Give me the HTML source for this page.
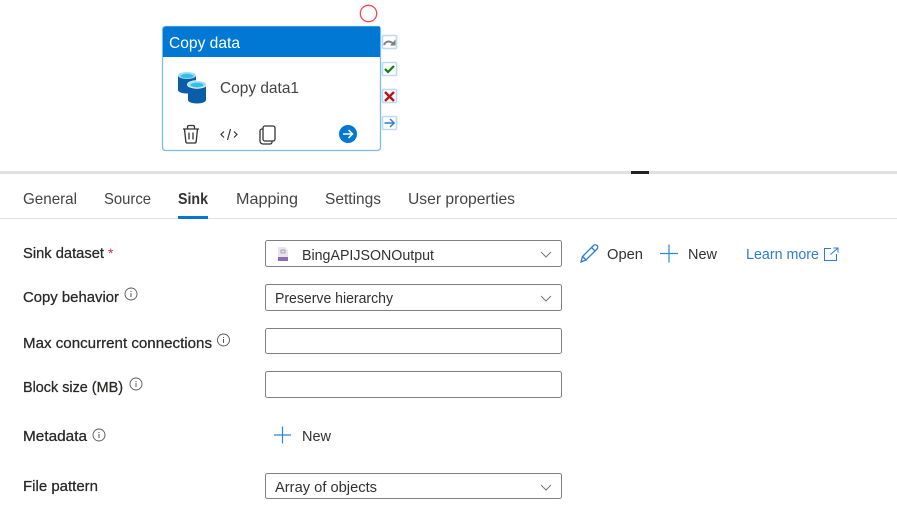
<!DOCTYPE html>
<html><head><meta charset="utf-8"><style>
html,body{margin:0;padding:0;background:#fff;width:897px;height:532px;overflow:hidden}
svg{display:block;filter:blur(.3px)}
text{font-family:"Liberation Sans",sans-serif;font-size:15px;fill:#323130}
.l{font-size:14.5px;fill:#292827;stroke:#292827;stroke-width:.25px}
.t{font-size:16px;fill:#444}
.b{fill:#fff;stroke:#808080;stroke-width:1}
.c{fill:none;stroke:#777;stroke-width:1}
.i{fill:none;stroke:#555;stroke-width:.9}
.p{fill:none;stroke:#2b88d8;stroke-width:1.2}
.s{fill:#fff;stroke:#bcdcf5;stroke-width:1.6}
</style></head><body>
<svg width="897" height="532" viewBox="0 0 897 532" xmlns="http://www.w3.org/2000/svg">
<rect width="897" height="532" fill="#fff"/>
<circle cx="368.5" cy="13.5" r="8.200" fill="#fff" stroke="#f4484f" stroke-width="1.300"/>
<!-- side buttons -->
<rect class="s" x="382.500" y="35.500" width="14" height="13" rx="1"/>
<rect class="s" x="382.500" y="62.500" width="14" height="13" rx="1"/>
<rect class="s" x="382.500" y="89.500" width="14" height="13" rx="1"/>
<rect class="s" x="382.500" y="116.500" width="14" height="13" rx="1"/>
<path d="M384 45c1.500-4 5.500-4.500 8.500-2" fill="none" stroke="#808080" stroke-width="2"/><path d="M395.500 39.500v6h-5.500z" fill="#808080"/>
<path d="M385 69l3 3 6-6" fill="none" stroke="#107c10" stroke-width="2.200"/>
<path d="M385 92l9 9M394 92l-9 9" fill="none" stroke="#b4161c" stroke-width="2.400"/>
<path d="M384.500 123h9.500M390 119l4.200 4-4.200 4" fill="none" stroke="#2b7cd3" stroke-width="1.400"/>
<!-- card -->
<rect x="162.500" y="26.500" width="218" height="124" rx="3" fill="#fff" stroke="#7dbce8" stroke-width="1.300"/>
<path d="M163 57V29.500a3 3 0 0 1 3-3H380V57z" fill="#0078d4"/>
<text x="169" y="48" style="font-size:16px;fill:#fff" textLength="71" lengthAdjust="spacingAndGlyphs">Copy data</text>
<!-- db icon -->
<path d="M178 76v14c0 2 4 3.500 9 3.500s9-1.500 9-3.500V76z" fill="#0a5ea8"/>
<ellipse cx="187" cy="75.500" rx="9" ry="3.500" fill="#9fdff2"/><ellipse cx="187" cy="76" rx="6.500" ry="2.200" fill="#35bfe6"/>
<path d="M188 85v15c0 2 4 3.500 9 3.500s9-1.500 9-3.500V85z" fill="#0a5ea8"/>
<ellipse cx="197" cy="84.500" rx="10" ry="4.200" fill="#fff"/>
<ellipse cx="197" cy="84.500" rx="9" ry="3.500" fill="#9fdff2"/><ellipse cx="197" cy="85" rx="6.500" ry="2.200" fill="#35bfe6"/>
<text class="t" x="220" y="93" textLength="79" lengthAdjust="spacingAndGlyphs">Copy data1</text>
<!-- trash -->
<g fill="none" stroke="#333" stroke-width="1.300">
<path d="M183 129h16M187.500 129v-2c0-1 .7-1.500 1.500-1.500h4c.8 0 1.500.5 1.500 1.500v2"/>
<path d="M184.500 129l1.300 12.500c.1 1 .8 1.500 1.700 1.500h7c.9 0 1.600-.5 1.700-1.500l1.300-12.500"/>
<path d="M189 132.500v7M193 132.500v7"/>
</g>
<!-- code -->
<path d="M224 131.500l-3 3 3 3M234 131.500l3 3-3 3M230.500 129l-3 11" fill="none" stroke="#333" stroke-width="1.200"/>
<!-- copy -->
<rect x="263" y="126" width="12" height="15" rx="2" fill="none" stroke="#333" stroke-width="1.300"/>
<path d="M263 129h-1a2 2 0 0 0-2 2v10a3 3 0 0 0 3 3h7a2 2 0 0 0 2-2v-1" fill="none" stroke="#333" stroke-width="1.300"/>
<circle cx="348" cy="134" r="9" fill="#0078d4"/>
<path d="M343 134h9.500M348.500 130l4 4-4 4" fill="none" stroke="#fff" stroke-width="1.500"/>
<!-- dividers -->
<rect x="0" y="171" width="897" height="3" fill="#e1e1e1"/>
<rect x="631" y="171" width="18" height="3" fill="#222"/>
<!-- tabs -->
<text class="t" x="23" y="204" textLength="54" lengthAdjust="spacingAndGlyphs">General</text>
<text class="t" x="104" y="204" textLength="47" lengthAdjust="spacingAndGlyphs">Source</text>
<text class="t" x="178" y="204" textLength="30" lengthAdjust="spacingAndGlyphs" style="font-weight:700;fill:#333">Sink</text>
<text class="t" x="236" y="204" textLength="62" lengthAdjust="spacingAndGlyphs">Mapping</text>
<text class="t" x="325" y="204" textLength="56" lengthAdjust="spacingAndGlyphs">Settings</text>
<text class="t" x="408" y="204" textLength="107" lengthAdjust="spacingAndGlyphs">User properties</text>
<rect x="0" y="218" width="897" height="1" fill="#e1e1e1"/>
<rect x="178" y="216" width="30" height="3" fill="#0078d4"/>
<!-- labels -->
<text class="l" x="23" y="258" textLength="81" lengthAdjust="spacingAndGlyphs">Sink dataset</text>
<text x="108" y="258" style="font-size:14px;fill:#c4314b">*</text>
<text class="l" x="23" y="302" textLength="96" lengthAdjust="spacingAndGlyphs">Copy behavior</text>
<text class="l" x="23" y="348" textLength="189" lengthAdjust="spacingAndGlyphs">Max concurrent connections</text>
<text class="l" x="23" y="392" textLength="100" lengthAdjust="spacingAndGlyphs">Block size (MB)</text>
<text class="l" x="23" y="441" textLength="64" lengthAdjust="spacingAndGlyphs">Metadata</text>
<text class="l" x="23" y="491" textLength="75" lengthAdjust="spacingAndGlyphs">File pattern</text>
<!-- info icons -->
<circle class="i" cx="131" cy="294" r="6"/><path d="M131 293v4M131 291v1" stroke="#555"/>
<circle class="i" cx="223.500" cy="340" r="6"/><path d="M223.500 339v4M223.500 337v1" stroke="#555"/>
<circle class="i" cx="136" cy="384" r="6"/><path d="M136 383v4M136 381v1" stroke="#555"/>
<circle class="i" cx="99" cy="435" r="6"/><path d="M99 434v4M99 432v1" stroke="#555"/>
<!-- boxes -->
<rect class="b" x="265.500" y="240.500" width="296" height="26" rx="2"/>
<rect class="b" x="265.500" y="284.500" width="296" height="26" rx="2"/>
<rect class="b" x="265.500" y="328.500" width="296" height="25" rx="2"/>
<rect class="b" x="265.500" y="371.500" width="296" height="26" rx="2"/>
<rect class="b" x="265.500" y="473.500" width="296" height="25" rx="2"/>
<path class="c" d="M541 252l5 5 5-5M541 296l5 5 5-5M541 485l5 5 5-5"/>
<!-- json icon -->
<path d="M278 247h7l3 3v11h-10z" fill="#e8e6ea"/><rect x="278" y="257" width="10" height="4" fill="#8b6bb1"/><rect x="281" y="250" width="4" height="3" fill="none" stroke="#8b6bb1" stroke-width=".6"/>
<text x="302" y="260" textLength="132" lengthAdjust="spacingAndGlyphs">BingAPIJSONOutput</text>
<text x="275" y="303" textLength="118" lengthAdjust="spacingAndGlyphs">Preserve hierarchy</text>
<text x="275" y="492" textLength="102" lengthAdjust="spacingAndGlyphs">Array of objects</text>
<!-- actions -->
<path d="M581 262l1.500-5.500 11-11c1-1 2.500-1 3.500 0s1 2.500 0 3.500l-11 11zM582.500 256.500l4 4M591.500 247.500l4 4" fill="none" stroke="#2b7cd3" stroke-width="1.300"/>
<text x="607" y="259" textLength="36" lengthAdjust="spacingAndGlyphs">Open</text>
<path class="p" d="M660 253.500h18M669 244.500v18"/>
<text x="688" y="259" textLength="29" lengthAdjust="spacingAndGlyphs">New</text>
<text x="746" y="259" textLength="73" lengthAdjust="spacingAndGlyphs" style="fill:#2b7cd3">Learn more</text>
<path d="M831 248.500h-6.500v12h12V254M830.500 254.500l7.500-6.500M833.500 248h4.500v4.500" fill="none" stroke="#2b7cd3" stroke-width="1"/>
<path class="p" d="M274 435h17M282.500 426.500v17"/>
<text x="302" y="441" textLength="29" lengthAdjust="spacingAndGlyphs">New</text>
</svg>
</body></html>
